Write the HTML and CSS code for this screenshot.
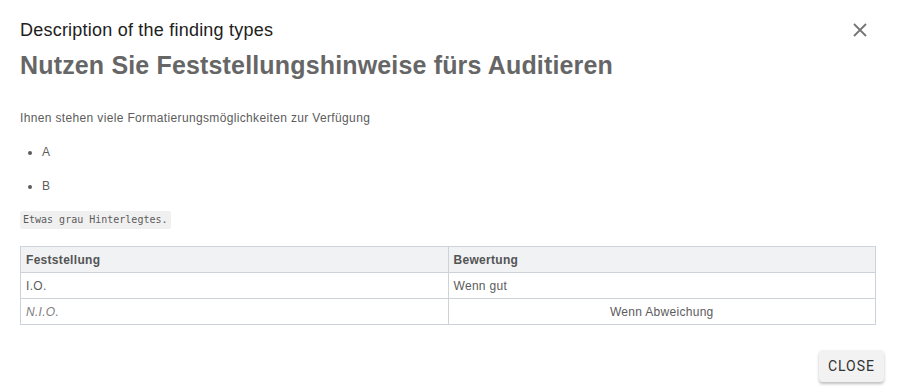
FILE: index.html
```html
<!DOCTYPE html>
<html lang="en">
  <head>
    <meta charset="UTF-8" />
    <title>Description of the finding types</title>
    <link rel="stylesheet" href="styles.css">
  </head>
  <body>
    <div class="dialog">
      <header class="dialog-header">
        <h2 class="dialog-title">Description of the finding types</h2>
        <button class="icon-close" aria-label="close">
          <svg width="14" height="14" viewBox="0 0 14 14">
            <path d="M1 1 L13 13 M13 1 L1 13" stroke="#757575" stroke-width="1.8" fill="none" />
          </svg>
        </button>
      </header>
      <div class="dialog-content">
        <h1 class="content-title">Nutzen Sie Feststellungshinweise fürs Auditieren</h1>
        <p class="intro">Ihnen stehen viele Formatierungsmöglichkeiten zur Verfügung</p>
        <ul>
          <li><p>A</p></li>
          <li><p>B</p></li>
        </ul>
        <p class="code-line"><code>Etwas grau Hinterlegtes.</code></p>
        <table>
          <thead>
            <tr>
              <th>Feststellung</th>
              <th>Bewertung</th>
            </tr>
          </thead>
          <tbody>
            <tr>
              <td>I.O.</td>
              <td>Wenn gut</td>
            </tr>
            <tr>
              <td><em>N.I.O.</em></td>
              <td class="center">Wenn Abweichung</td>
            </tr>
          </tbody>
        </table>
      </div>
      <footer class="dialog-actions">
        <button class="btn-close">Close</button>
      </footer>
    </div>
  </body>
</html>
```

FILE: styles.css
```css
:root {
  --text-color: hsl(0, 0%, 36%);
  --border-color: hsl(220, 14%, 83%);
  --header-bg: hsl(220, 14%, 95%);
}

* {
  margin: 0;
  padding: 0;
  box-sizing: border-box;
}

body {
  background-color: #fff;
  font-family: 'Liberation Sans', Arial, sans-serif;
  color: var(--text-color);
}

.dialog {
  width: 898px;
  height: 388px;
  padding: 0 14px 6px 20px;
  display: flex;
  flex-direction: column;
}

.dialog-header {
  display: flex;
  justify-content: space-between;
  align-items: center;
  padding-top: 18px;
  padding-right: 12px;
}

.dialog-title {
  font-size: 18px;
  font-weight: 400;
  letter-spacing: 0.22px;
  color: hsl(0, 0%, 13%);
  line-height: 22px;
}

.icon-close {
  width: 24px;
  height: 24px;
  display: flex;
  align-items: center;
  justify-content: center;
  border: none;
  background: none;
  cursor: pointer;
}

.dialog-content {
  flex: 1;
  padding-right: 8px;
  font-size: 12px;
}

.content-title {
  margin-top: 8px;
  font-size: 25px;
  font-weight: 700;
  letter-spacing: 0.16px;
  line-height: 30px;
  color: hsl(0, 0%, 40%);
}

.dialog-content p {
  margin-top: 20px;
  line-height: 14px;
  letter-spacing: 0.35px;
}

.dialog-content p.intro {
  margin-top: 31px;
}

ul {
  padding-left: 22px;
}

ul li p {
  margin-top: 19px;
}

code {
  display: inline-block;
  padding: 2px 3px;
  font-family: 'DejaVu Sans Mono', monospace;
  font-size: 10px;
  letter-spacing: 0;
  background-color: hsl(0, 0%, 94%);
  border-radius: 2px;
}

.dialog-content p.code-line {
  margin-top: 18px;
}

table {
  width: 100%;
  margin-top: 17px;
  border-collapse: collapse;
  font-size: 12px;
  letter-spacing: 0.3px;
}

th,
td {
  width: 50%;
  height: 26px;
  padding: 0 5px;
  text-align: left;
  border: 1px solid var(--border-color);
}

th {
  background-color: var(--header-bg);
  color: hsl(0, 0%, 33%);
}

td em {
  color: hsl(0, 0%, 50%);
}

td.center {
  text-align: center;
}

.dialog-actions {
  display: flex;
  justify-content: flex-end;
}

.btn-close {
  padding: 0 9px;
  height: 32px;
  min-width: 64px;
  border: none;
  border-radius: 4px;
  background-color: hsl(0, 0%, 95%);
  font-family: Roboto, sans-serif;
  font-size: 14px;
  font-weight: 400;
  letter-spacing: 1px;
  text-transform: uppercase;
  color: hsl(0, 0%, 20%);
  box-shadow: 0 2px 3px rgba(0, 0, 0, 0.25);
  cursor: pointer;
}
```
